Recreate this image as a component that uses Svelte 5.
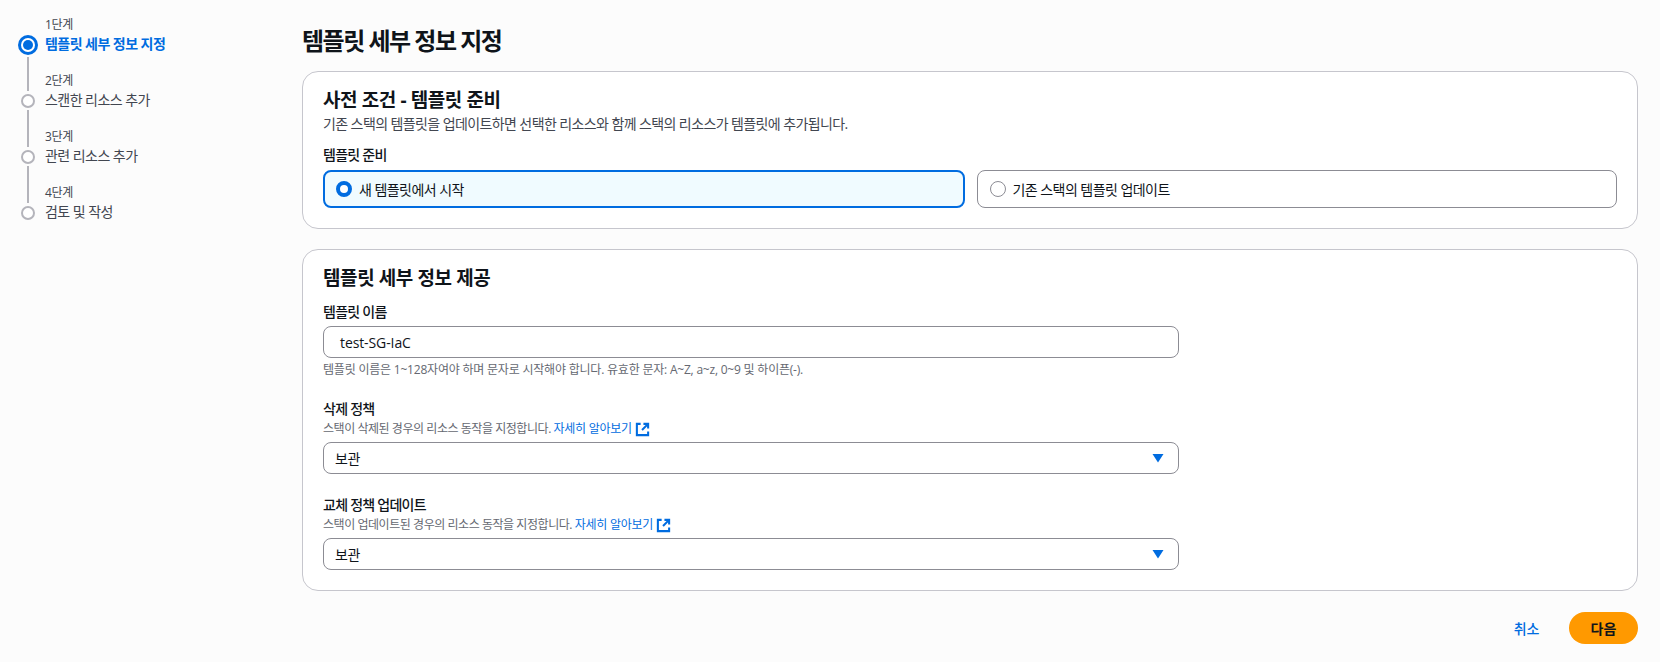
<script>
  const steps = [
    { n: '1단계', t: '템플릿 세부 정보 지정', active: true },
    { n: '2단계', t: '스캔한 리소스 추가' },
    { n: '3단계', t: '관련 리소스 추가' },
    { n: '4단계', t: '검토 및 작성' }
  ];
</script>

{#snippet ext()}
  <svg class="ext" viewBox="0 0 16 16" fill="none" stroke="#006ce0" stroke-width="2.2"><path d="M6 2H2v12h12v-4" /><path d="M9 2h5v5M14 2 7.5 8.5" /></svg>
{/snippet}

{#snippet select()}
  <div class="select"><span>보관</span><svg viewBox="0 0 12 10" width="12" height="10"><path d="M0.5 1h11L6 9.5z" fill="#006ce0" /></svg></div>
{/snippet}

<div class="page">
  <nav class="side">
    {#each steps as s, i}
      <div class="step" class:active={s.active} class:last={i === steps.length - 1}>
        <div class="num">{s.n}</div>
        <div class="row"><span class="dot"></span><span class="title">{s.t}</span></div>
      </div>
    {/each}
  </nav>
  <main>
    <h1>템플릿 세부 정보 지정</h1>
    <section class="card first">
      <h2>사전 조건 - 템플릿 준비</h2>
      <p class="desc">기존 스택의 템플릿을 업데이트하면 선택한 리소스와 함께 스택의 리소스가 템플릿에 추가됩니다.</p>
      <div class="label mt">템플릿 준비</div>
      <div class="tiles">
        <div class="tile on"><span class="radio"></span>새 템플릿에서 시작</div>
        <div class="tile"><span class="radio"></span>기존 스택의 템플릿 업데이트</div>
      </div>
    </section>
    <section class="card second">
      <h2>템플릿 세부 정보 제공</h2>
      <div class="form">
        <div class="field">
          <div class="label">템플릿 이름</div>
          <div class="input">test-SG-IaC</div>
          <div class="small hint">템플릿 이름은 1~128자여야 하며 문자로 시작해야 합니다. 유효한 문자: A~Z, a~z, 0~9 및 하이픈(-).</div>
        </div>
        <div class="field">
          <div class="label">삭제 정책</div>
          <div class="small sub">스택이 삭제된 경우의 리소스 동작을 지정합니다. <a href="#a">자세히 알아보기</a>{@render ext()}</div>
          {@render select()}
        </div>
        <div class="field">
          <div class="label">교체 정책 업데이트</div>
          <div class="small sub">스택이 업데이트된 경우의 리소스 동작을 지정합니다. <a href="#a">자세히 알아보기</a>{@render ext()}</div>
          {@render select()}
        </div>
      </div>
    </section>
    <div class="actions">
      <a class="cancel" href="#a">취소</a>
      <button>다음</button>
    </div>
  </main>
</div>

<style>
  :global(body) {
    margin: 0;
    background: #fcfcfc;
    font-family: "Open Sans", "Noto Sans CJK KR", sans-serif;
    color: #0f141a;
  }
  .page {
    display: flex;
    height: 662px;
    overflow: hidden;
  }
  .side {
    width: 302px;
    flex: none;
    padding-top: 17px;
    box-sizing: border-box;
  }
  .step {
    position: relative;
    height: 56px;
    padding-left: 45px;
  }
  .step:not(.last)::after {
    content: "";
    position: absolute;
    left: 27px;
    top: 37px;
    width: 2px;
    height: 37px;
    background: #b4b4bb;
  }
  .step.active::after {
    top: 40px;
    height: 34px;
  }
  .num {
    font-size: 12px;
    line-height: 16px;
    color: #424650;
    letter-spacing: -0.3px;
  }
  .row {
    position: relative;
    line-height: 20px;
    margin-top: 1px;
    font-size: 14px;
    color: #424650;
    letter-spacing: -0.55px;
  }
  .dot {
    position: absolute;
    left: -24px;
    top: 4px;
    width: 10px;
    height: 10px;
    border: 2px solid #b4b4bb;
    border-radius: 50%;
    background: #fff;
  }
  .active .dot {
    left: -22px;
    top: 6px;
    width: 10px;
    height: 10px;
    border: 0;
    background: #006ce0;
    box-shadow: 0 0 0 2px #fff, 0 0 0 5px #006ce0;
  }
  .active .title {
    color: #006ce0;
    font-weight: 700;
  }
  main {
    flex: 1;
    padding-right: 22px;
    min-width: 0;
  }
  h1 {
    margin: 0;
    padding-top: 25px;
    font-size: 24px;
    line-height: 32px;
    font-weight: 700;
    letter-spacing: -1.5px;
    height: 46px;
  }
  .card {
    background: #fff;
    border: 1px solid #c6c6cd;
    border-radius: 16px;
    padding: 17px 20px;
    box-sizing: border-box;
  }
  .first { height: 158px; }
  .second { height: 342px; margin-top: 20px; }
  h2 {
    margin: 0;
    font-size: 19px;
    line-height: 22px;
    font-weight: 700;
    letter-spacing: -0.4px;
  }
  .desc {
    margin: 3px 0 0;
    font-size: 14px;
    line-height: 20px;
    color: #424650;
    letter-spacing: -0.6px;
  }
  .label {
    font-size: 14px;
    line-height: 20px;
    font-weight: 500;
    color: #0f141a;
    letter-spacing: -0.75px;
  }
  .mt { margin-top: 11px; }
  .tiles {
    display: flex;
    gap: 12px;
    margin-top: 5px;
  }
  .tile {
    flex: 1;
    height: 38px;
    box-sizing: border-box;
    border: 1px solid #8c8c94;
    border-radius: 8px;
    display: flex;
    align-items: center;
    gap: 7px;
    padding-left: 12px;
    font-size: 14px;
    letter-spacing: -0.55px;
  }
  .tile.on {
    border: 2px solid #006ce0;
    background: #f0fbff;
    padding-left: 11px;
  }
  .radio {
    width: 16px;
    height: 16px;
    box-sizing: border-box;
    border: 1px solid #8c8c94;
    border-radius: 50%;
    background: #fff;
  }
  .on .radio { border: 4px solid #006ce0; }
  .form { margin-top: 13px; width: 856px; }
  .field { margin-bottom: 21px; }
  .input, .select {
    height: 32px;
    box-sizing: border-box;
    border: 1px solid #8c8c94;
    border-radius: 8px;
    background: #fff;
    font-size: 14px;
    display: flex;
    align-items: center;
    justify-content: space-between;
    margin-top: 4px;
  }
  .input { padding-left: 16px; letter-spacing: -0.1px; }
  .select { padding: 0 14px 0 11px; margin-top: 5px; letter-spacing: -0.5px; }
  .small {
    font-size: 12px;
    line-height: 16px;
    color: #656871;
  }
  .hint { margin-top: 4px; letter-spacing: -0.21px; }
  .sub { display: flex; align-items: center; white-space: pre; margin-top: 2px; letter-spacing: -0.45px; }
  .sub a { letter-spacing: -0.25px; }
  a { color: #006ce0; text-decoration: none; }
  .ext { margin-left: 3px; width: 15px; height: 15px; }
  .actions {
    display: flex;
    justify-content: flex-end;
    align-items: center;
    margin-top: 21px;
    gap: 30px;
  }
  .cancel { font-size: 14px; font-weight: 500; letter-spacing: -0.3px; }
  button {
    width: 69px;
    height: 32px;
    border: 0;
    border-radius: 16px;
    background: #ff9900;
    color: #0f141a;
    font: inherit;
    font-size: 14px;
    font-weight: 700;
  }
</style>
